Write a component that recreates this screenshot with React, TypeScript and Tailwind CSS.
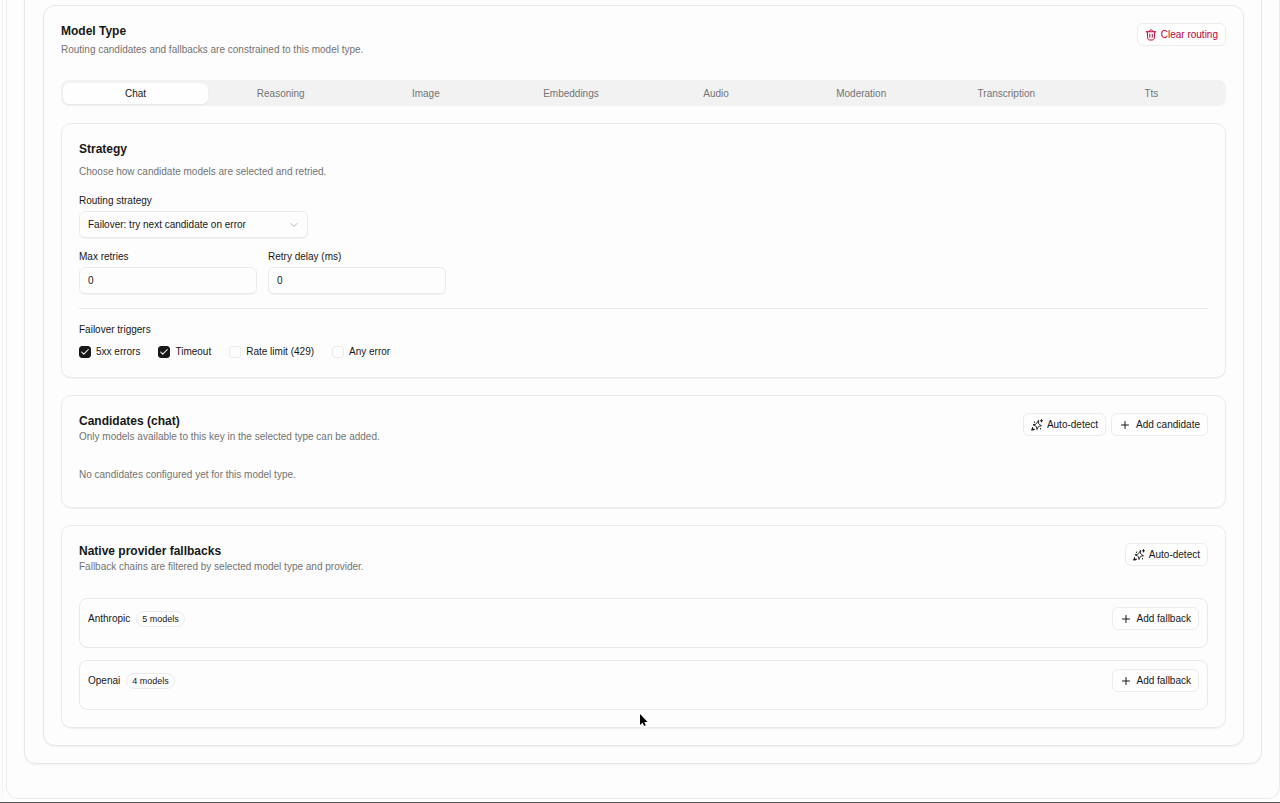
import { useState, type ReactNode } from "react";
import { Check, ChevronDown, Plus } from "lucide-react";

const modelTypes = ["Chat", "Reasoning", "Image", "Embeddings", "Audio", "Moderation", "Transcription", "Tts"];

function SparkleIcon() {
  return (
    <svg viewBox="0 0 24 24" className="size-3" fill="none" stroke="currentColor" strokeWidth="1.800" strokeLinecap="round" strokeLinejoin="round" aria-hidden="true">
      <path d="M15 3.500l.3 5.300c.1 1 .5 1.500 1.300 2L21 13.500l-5 1.100c-1 .2-1.500.7-1.900 1.600L12 21l-1-5c-.2-1-.7-1.500-1.600-1.900L4 11.500l5.300-1c1-.2 1.500-.6 2-1.400z" />
      <path d="M21 1v5M18.500 3.500h5" />
      <path d="M3 17.500v4M1.500 21.500h3M6.500 20.500h.01M7 6.500h.01M19 19.500h.01" strokeWidth="2.600" />
    </svg>
  );
}

function TrashIcon() {
  return (
    <svg viewBox="0 0 24 24" className="size-3" fill="none" stroke="currentColor" strokeWidth="2" strokeLinecap="round" strokeLinejoin="round" aria-hidden="true">
      <path d="M19.5 5.5l-.62 10.025c-.158 2.561-.237 3.842-.88 4.763a4 4 0 0 1-1.200 1.128C15.842 22 14.559 22 11.993 22c-2.570 0-3.855 0-4.814-.585a4 4 0 0 1-1.200-1.130c-.642-.922-.72-2.205-.874-4.770L4.500 5.500" />
      <path d="M2.500 5.500h19M16.056 5.500l-.683-1.408c-.453-.936-.68-1.403-1.071-1.695C13.800 2 13.250 2 12.150 2c-1.150 0-1.750 0-2.300.41-.4.300-.63.790-1.080 1.760L8.150 5.500" />
      <path d="M9.500 16.500v-6M14.500 16.500v-6" />
    </svg>
  );
}

function OutlineButton({ icon, children, danger = false }: { icon: ReactNode; children: ReactNode; danger?: boolean }) {
  return (
    <button
      type="button"
      className={
        danger
          ? "flex h-[23px] shrink-0 items-center gap-1 rounded-md border border-[#ececec] bg-[#fefefe] px-[7px] text-[#c70036]"
          : "flex h-[23px] shrink-0 items-center gap-1 rounded-md border border-[#ececec] bg-[#fefefe] px-[7px] text-[#171717]"
      }
    >
      {icon}
      {children}
    </button>
  );
}

function Card({ children }: { children: ReactNode }) {
  return <section className="rounded-[10px] border border-[#ebebeb] p-[17px] shadow-2xs">{children}</section>;
}

function CardHeader({ title, description, children }: { title: string; description: string; children: ReactNode }) {
  return (
    <div className="flex items-start justify-between gap-4">
      <div>
        <h2 className="text-[12px] font-bold">{title}</h2>
        <p className="text-[#737373]">{description}</p>
      </div>
      <div className="flex gap-[5px]">{children}</div>
    </div>
  );
}

function NumberField({ id, label }: { id: string; label: string }) {
  return (
    <div className="flex w-[178px] flex-col gap-0.5">
      <label htmlFor={id}>{label}</label>
      <input id={id} type="text" inputMode="numeric" defaultValue="0" className="h-[27px] w-full rounded-md border border-[#ebebeb] bg-transparent px-2 shadow-2xs" />
    </div>
  );
}

function Trigger({ label, initial }: { label: string; initial: boolean }) {
  const [checked, setChecked] = useState(initial);
  return (
    <label className="flex items-center gap-[5px]">
      <span className="grid size-3 place-items-center">
        <input
          type="checkbox"
          checked={checked}
          onChange={() => setChecked(!checked)}
          className="col-start-1 row-start-1 size-3 appearance-none rounded-[3px] border border-[#ebebeb] checked:border-[#171717] checked:bg-[#171717]"
        />
        {checked && <Check className="pointer-events-none col-start-1 row-start-1 size-2.5 text-white" strokeWidth={2.5} />}
      </span>
      {label}
    </label>
  );
}

function Provider({ name, models }: { name: string; models: number }) {
  return (
    <div className="flex h-[50px] items-start justify-between rounded-lg border border-[#e9e9e9] px-2 pt-2">
      <div className="flex h-[23px] items-center gap-1.5">
        <span>{name}</span>
        <span className="rounded-full border border-[#ebebeb] px-[5px] text-[9px] leading-[14px]">{models} models</span>
      </div>
      <OutlineButton icon={<Plus className="mr-px size-3" />}>Add fallback</OutlineButton>
    </div>
  );
}

export default function App() {
  const [active, setActive] = useState("Chat");
  return (
    <div className="flex min-h-screen flex-col bg-[#fdfdfd] font-['Liberation_Sans',sans-serif] text-[10px] leading-4 text-[#171717]">
      <div className="ml-0.5 grow border-l border-[#f5f5f5] pl-[3px]">
        <div className="rounded-b-xl border border-t-0 border-[#ededed] px-[17px] pb-[34px]">
          <div className="rounded-b-xl border border-t-0 border-[#e7e7e7] pt-[5px] pr-[17px] pb-[17px] pl-[18px] shadow-xs">
            <main className="flex flex-col gap-[17px] rounded-xl border border-[#e7e7e7] p-[17px] shadow-xs">
              <div className="flex items-start justify-between pb-[5px]">
                <div className="flex flex-col gap-[3px]">
                  <h1 className="text-[12px] font-bold">Model Type</h1>
                  <p className="text-[#737373]">Routing candidates and fallbacks are constrained to this model type.</p>
                </div>
                <OutlineButton danger icon={<TrashIcon />}>Clear routing</OutlineButton>
              </div>

              <div role="tablist" className="grid h-[26px] grid-cols-8 rounded-lg bg-[#f2f2f2] px-0.5 pt-[3px] pb-0.5">
                {modelTypes.map((type) => (
                  <button
                    key={type}
                    type="button"
                    role="tab"
                    aria-selected={active === type}
                    onClick={() => setActive(type)}
                    className={active === type ? "rounded-md bg-[#fefefe] shadow-xs" : "rounded-md text-[#737373]"}
                  >
                    {type}
                  </button>
                ))}
              </div>

              <Card>
                <div className="flex flex-col gap-[7px]">
                  <h2 className="text-[12px] font-bold">Strategy</h2>
                  <p className="text-[#737373]">Choose how candidate models are selected and retried.</p>
                </div>
                <div className="flex flex-col items-start gap-0.5 pt-[13px]">
                  <label htmlFor="strategy">Routing strategy</label>
                  <div className="grid w-[229px] items-center">
                    <select id="strategy" className="col-start-1 row-start-1 h-[27px] w-full appearance-none rounded-md border border-[#ebebeb] bg-transparent px-2 shadow-2xs">
                      <option>Failover: try next candidate on error</option>
                    </select>
                    <ChevronDown className="pointer-events-none col-start-1 row-start-1 mr-2 size-3 justify-self-end text-[#b5b5b5]" />
                  </div>
                </div>
                <div className="flex gap-[11px] pt-[11px]">
                  <NumberField id="max-retries" label="Max retries" />
                  <NumberField id="retry-delay" label="Retry delay (ms)" />
                </div>
                <hr className="mt-3.5 border-[#ebebeb]" />
                <fieldset className="pt-[13px]">
                  <legend className="contents">Failover triggers</legend>
                  <div className="flex gap-[18px] pt-1.5">
                    <Trigger label="5xx errors" initial />
                    <Trigger label="Timeout" initial />
                    <Trigger label="Rate limit (429)" initial={false} />
                    <Trigger label="Any error" initial={false} />
                  </div>
                </fieldset>
              </Card>

              <Card>
                <CardHeader title="Candidates (chat)" description="Only models available to this key in the selected type can be added.">
                  <OutlineButton icon={<SparkleIcon />}>Auto-detect</OutlineButton>
                  <OutlineButton icon={<Plus className="mr-px size-3" />}>Add candidate</OutlineButton>
                </CardHeader>
                <p className="pt-[22px] pb-[7px] text-[#737373]">No candidates configured yet for this model type.</p>
              </Card>

              <Card>
                <CardHeader title="Native provider fallbacks" description="Fallback chains are filtered by selected model type and provider.">
                  <OutlineButton icon={<SparkleIcon />}>Auto-detect</OutlineButton>
                </CardHeader>
                <div className="flex flex-col gap-3 pt-[23px]">
                  <Provider name="Anthropic" models={5} />
                  <Provider name="Openai" models={4} />
                </div>
              </Card>
            </main>
          </div>
        </div>
      </div>
      <div className="h-px bg-[#555555]" />
      <svg viewBox="0 0 10 14" className="pointer-events-none absolute top-[713px] left-[639px] h-3.5 w-2.5" aria-hidden="true">
        <path d="M1 1v11l2.500-2.200L5.200 13l1.600-.7-1.500-3.200H8.500z" fill="#000" />
      </svg>
    </div>
  );
}
